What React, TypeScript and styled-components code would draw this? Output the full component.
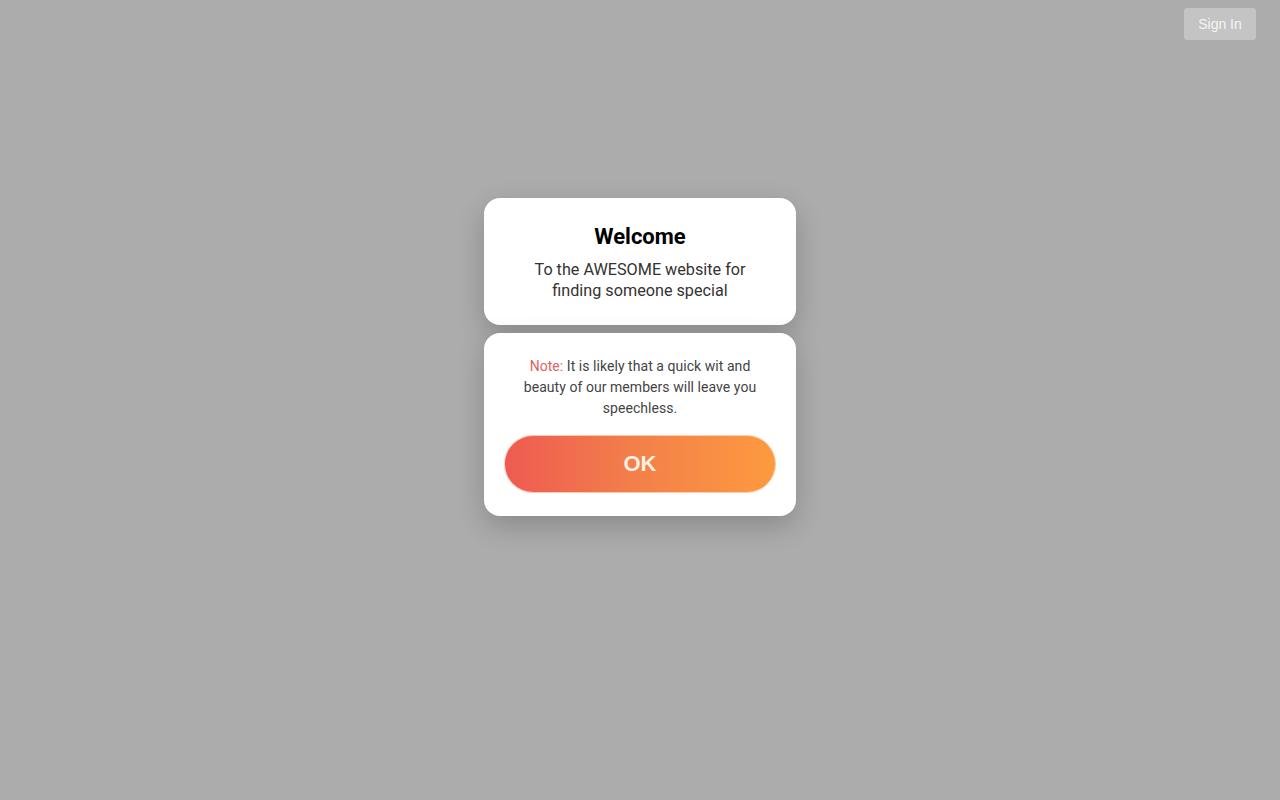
import React from "react";
import styled, { createGlobalStyle } from "styled-components";

const Global = createGlobalStyle`
  html, body { margin: 0; padding: 0; }
  body { background: #acacac; font-family: Roboto, "Liberation Sans", sans-serif; }
  * { box-sizing: border-box; }
`;

const Page = styled.div`
  min-height: 100vh;
  display: flex;
  flex-direction: column;
`;

const Header = styled.header`
  display: flex;
  justify-content: flex-end;
  padding: 8px 24px 0 0;
`;

const SignIn = styled.button`
  width: 72px;
  height: 32px;
  border: none;
  border-radius: 3px;
  background: #c4c4c4;
  color: #f4f4f4;
  font-family: "Liberation Sans", Arial, sans-serif;
  font-size: 14px;
  cursor: pointer;
`;

const Main = styled.main`
  display: flex;
  flex-direction: column;
  align-items: center;
  gap: 8px;
  padding-top: 158px;
`;

const Card = styled.section<{ $pad: string }>`
  width: 312px;
  background: #fff;
  border-radius: 16px;
  padding: ${(p) => p.$pad};
  box-shadow: 0 10px 28px rgba(0, 0, 0, 0.2);
  text-align: center;
  display: flex;
  flex-direction: column;
  align-items: center;
`;

const Title = styled.h1`
  margin: 0;
  font-family: Roboto, sans-serif;
  font-weight: 700;
  font-size: 22px;
  line-height: 28px;
  color: #000;
`;

const Subtitle = styled.p`
  margin: 8px 0 0;
  font-size: 16.2px;
  line-height: 21px;
  color: #333;
  width: 230px;
`;

const Note = styled.p`
  margin: 0;
  font-size: 14px;
  line-height: 21px;
  letter-spacing: 0.05px;
  color: #444;
  width: 250px;
`;

const NoteLabel = styled.span`
  color: #e0635c;
`;

const OkButton = styled.button`
  margin-top: 16px;
  width: 272px;
  height: 58px;
  border-radius: 29px;
  border: 1px solid rgba(255, 220, 200, 0.8);
  background: linear-gradient(90deg, #ee5b51 0%, #f3814a 50%, #fd9a3e 100%);
  color: rgba(255, 248, 238, 0.95);
  font-family: "Liberation Sans", Arial, sans-serif;
  font-weight: 700;
  font-size: 22px;
  cursor: pointer;
`;

export default function App() {
  return (
    <>
      <Global />
      <Page>
        <Header>
          <SignIn>Sign In</SignIn>
        </Header>
        <Main>
          <Card $pad="25px 20px 24px">
            <Title>Welcome</Title>
            <Subtitle>To the AWESOME website for finding someone special</Subtitle>
          </Card>
          <Card $pad="23px 20px 23px">
            <Note>
              <NoteLabel>Note:</NoteLabel> It is likely that a quick wit and beauty of our members will leave you speechless.
            </Note>
            <OkButton>OK</OkButton>
          </Card>
        </Main>
      </Page>
    </>
  );
}
